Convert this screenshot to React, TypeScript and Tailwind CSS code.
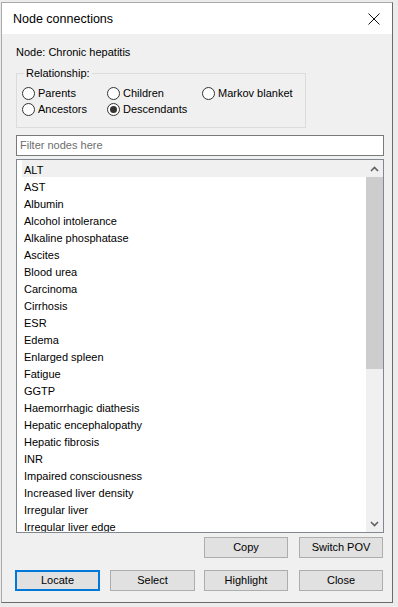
import React from "react";

const items = [
  "ALT",
  "AST",
  "Albumin",
  "Alcohol intolerance",
  "Alkaline phosphatase",
  "Ascites",
  "Blood urea",
  "Carcinoma",
  "Cirrhosis",
  "ESR",
  "Edema",
  "Enlarged spleen",
  "Fatigue",
  "GGTP",
  "Haemorrhagic diathesis",
  "Hepatic encephalopathy",
  "Hepatic fibrosis",
  "INR",
  "Impaired consciousness",
  "Increased liver density",
  "Irregular liver",
  "Irregular liver edge",
];

function Radio({ label, checked }: { label: string; checked?: boolean }) {
  return (
    <label className="flex h-[16px] items-center">
      <span className="flex h-[13px] w-[13px] items-center justify-center rounded-full border border-[#333] bg-white">
        {checked ? <span className="h-[7px] w-[7px] rounded-full bg-[#333]" /> : null}
      </span>
      <span className="ml-[3px]">{label}</span>
    </label>
  );
}

function Button({
  label,
  focused,
  className,
}: {
  label: string;
  focused?: boolean;
  className: string;
}) {
  const edge = focused ? "border-2 border-[#0078d7]" : "border border-[#adadad]";
  return (
    <button
      className={`flex h-[21px] items-center justify-center bg-[#e1e1e1] text-black ${edge} ${className}`}
    >
      {label}
    </button>
  );
}

function Chevron({ up }: { up?: boolean }) {
  return (
    <svg width="9" height="6" viewBox="0 0 9 6">
      <path
        d={up ? "M1 5 L4.5 1.5 L8 5" : "M1 1 L4.5 4.5 L8 1"}
        fill="none"
        stroke="#606060"
        strokeWidth="1.6"
      />
    </svg>
  );
}

export default function App() {
  return (
    <div
      className="h-[607px] w-[398px] overflow-hidden bg-[#ececec] pl-[1px] pt-[2px] text-[11px] text-black"
      style={{ fontFamily: '"Liberation Sans", Arial, sans-serif' }}
    >
      <div className="flex h-[601px] w-[392px] flex-col border border-[#a9a9a9] border-b-[#6b6b6b] border-r-[#6b6b6b] bg-[#f0f0f0]">
        {/* title bar */}
        <div className="flex h-[31px] items-center justify-between bg-white pl-[11px] pr-[7px]">
          <span className="pt-[1px] text-[12.5px]">Node connections</span>
          <svg width="22" height="22" viewBox="0 0 22 22">
            <path d="M5.5 5.5 L16.5 16.5 M16.5 5.5 L5.5 16.5" stroke="#111" strokeWidth="1" />
          </svg>
        </div>

        <div className="flex flex-col pl-[14px]">
          <div className="mt-[11px] h-[14px] leading-[14px]">Node: Chronic hepatitis</div>

          {/* group box */}
          <div className="relative mt-[14px] h-[55px] w-[290px] border border-[#dcdcdc]">
            <span className="absolute left-[7px] top-[-8px] bg-[#f0f0f0] px-[2px] leading-[14px]">
              Relationship:
            </span>
            <div className="mt-[11px] grid grid-cols-[85px_95px_auto] pl-[5px]">
              <Radio label="Parents" />
              <Radio label="Children" />
              <Radio label="Markov blanket" />
              <Radio label="Ancestors" />
              <Radio label="Descendants" checked />
            </div>
          </div>

          {/* filter */}
          <div className="mt-[7px] flex h-[21px] w-[368px] items-center border border-[#7a7a7a] bg-white pl-[3px] text-[#6d6d6d]">
            Filter nodes here
          </div>

          {/* list */}
          <div className="mt-[3px] flex h-[374px] w-[368px] border border-[#828790] bg-white">
            <div className="flex-1 overflow-hidden pl-[5px]">
              {items.map((item, i) => (
                <div
                  key={item}
                  className={
                    i === 0
                      ? "h-[17px] bg-[#f0f0f0] pl-[2px] leading-[20px]"
                      : "h-[17px] pl-[2px] leading-[20px]"
                  }
                >
                  {item}
                </div>
              ))}
            </div>
            <div className="flex w-[17px] flex-col bg-[#f0f0f0]">
              <div className="flex h-[17px] items-center justify-center">
                <Chevron up />
              </div>
              <div className="h-[192px] bg-[#cdcdcd]" />
              <div className="flex-1" />
              <div className="flex h-[17px] items-center justify-center">
                <Chevron />
              </div>
            </div>
          </div>

          {/* buttons */}
          <div className="mt-[4px] flex pl-[188px]">
            <Button label="Copy" className="w-[84px]" />
            <Button label="Switch POV" className="ml-[11px] w-[84px]" />
          </div>
          <div className="ml-[-1px] mt-[12px] flex">
            <Button label="Locate" focused className="w-[85px]" />
            <Button label="Select" className="ml-[10px] w-[85px]" />
            <Button label="Highlight" className="ml-[9px] w-[84px]" />
            <Button label="Close" className="ml-[11px] w-[84px]" />
          </div>
        </div>
      </div>
    </div>
  );
}
